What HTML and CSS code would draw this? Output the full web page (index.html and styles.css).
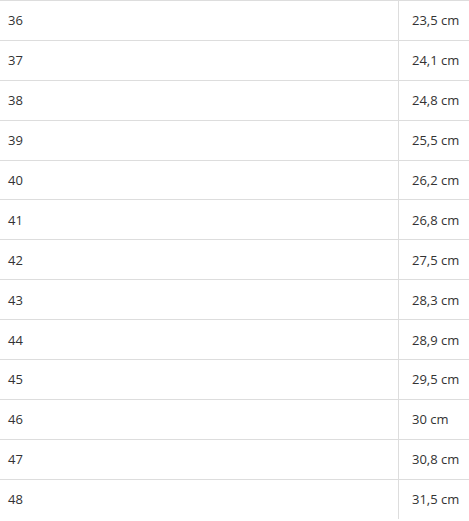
FILE: index.html
```html
<!DOCTYPE html>
<html>
<head>
<meta charset="utf-8">
<link rel="stylesheet" href="styles.css">
</head>
<body>
<table class="sizes">
<tbody>
<tr><td class="eu">36</td><td class="cm">23,5 cm</td></tr>
<tr><td class="eu">37</td><td class="cm">24,1 cm</td></tr>
<tr><td class="eu">38</td><td class="cm">24,8 cm</td></tr>
<tr><td class="eu">39</td><td class="cm">25,5 cm</td></tr>
<tr><td class="eu">40</td><td class="cm">26,2 cm</td></tr>
<tr><td class="eu">41</td><td class="cm">26,8 cm</td></tr>
<tr><td class="eu">42</td><td class="cm">27,5 cm</td></tr>
<tr><td class="eu">43</td><td class="cm">28,3 cm</td></tr>
<tr><td class="eu">44</td><td class="cm">28,9 cm</td></tr>
<tr><td class="eu">45</td><td class="cm">29,5 cm</td></tr>
<tr><td class="eu">46</td><td class="cm">30 cm</td></tr>
<tr><td class="eu">47</td><td class="cm">30,8 cm</td></tr>
<tr><td class="eu">48</td><td class="cm">31,5 cm</td></tr>
</tbody>
</table>
</body>
</html>
```
FILE: styles.css
```css
html, body {
  margin: 0;
  padding: 0;
  background: #ffffff;
}
body {
  font-family: "Open Sans", "Liberation Sans", sans-serif;
  font-size: 13px;
  color: #333333;
  overflow: hidden;
}
.sizes {
  width: 469px;
  border-collapse: collapse;
  table-layout: fixed;
}
.sizes tr {
  height: 39.9px;
}
.sizes td {
  border-top: 1px solid #dddddd;
  padding: 0;
  vertical-align: middle;
  line-height: 18px;
  white-space: nowrap;
}
.sizes .eu {
  width: 390px;
  padding-left: 8px;
}
.sizes .cm {
  border-left: 1px solid #dddddd;
  padding-left: 13px;
}
```
